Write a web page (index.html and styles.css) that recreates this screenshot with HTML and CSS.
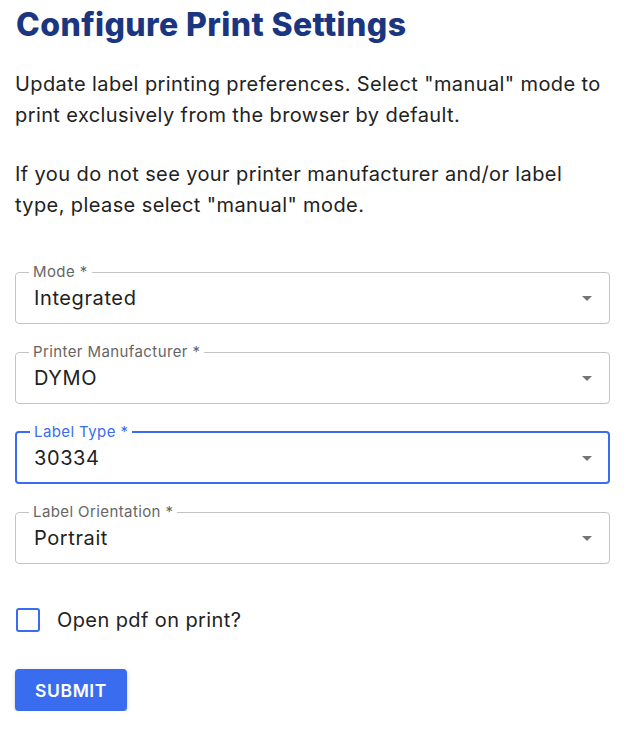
FILE: index.html
```html
<!DOCTYPE html>
<html lang="en">
<head>
<meta charset="utf-8">
<title>Configure Print Settings</title>
<link rel="stylesheet" href="styles.css">
</head>
<body>
<main class="page">
  <h1 class="title">Configure Print Settings</h1>
  <p class="intro">Update label printing preferences. Select "manual" mode to print exclusively from the browser by default.</p>
  <p class="intro">If you do not see your printer manufacturer and/or label type, please select "manual" mode.</p>

  <form class="form">
    <fieldset class="field">
      <legend class="field-label">Mode *</legend>
      <div class="field-row">
        <span class="field-value">Integrated</span>
        <svg class="caret" viewBox="0 0 24 24" width="24" height="24"><path d="M7 10l5 5 5-5z"/></svg>
      </div>
    </fieldset>
    <fieldset class="field">
      <legend class="field-label">Printer Manufacturer *</legend>
      <div class="field-row">
        <span class="field-value">DYMO</span>
        <svg class="caret" viewBox="0 0 24 24" width="24" height="24"><path d="M7 10l5 5 5-5z"/></svg>
      </div>
    </fieldset>
    <fieldset class="field field-focused">
      <legend class="field-label">Label Type *</legend>
      <div class="field-row">
        <span class="field-value">30334</span>
        <svg class="caret" viewBox="0 0 24 24" width="24" height="24"><path d="M7 10l5 5 5-5z"/></svg>
      </div>
    </fieldset>
    <fieldset class="field">
      <legend class="field-label">Label Orientation *</legend>
      <div class="field-row">
        <span class="field-value">Portrait</span>
        <svg class="caret" viewBox="0 0 24 24" width="24" height="24"><path d="M7 10l5 5 5-5z"/></svg>
      </div>
    </fieldset>

    <label class="check">
      <span class="check-box"></span>
      <span class="check-text">Open pdf on print?</span>
    </label>

    <button type="button" class="submit">SUBMIT</button>
  </form>
</main>
</body>
</html>
```
FILE: styles.css
```css
* { box-sizing: border-box; }
html, body { margin: 0; padding: 0; background: #fff; }
body {
  font-family: "Inter", "Liberation Sans", sans-serif;
  color: #222;
}
.page {
  padding: 5px 18px 0 15px;
}
.title {
  margin: 0;
  font-size: 32px;
  line-height: 40px;
  font-weight: 800;
  color: #1b3680;
  padding-left: 1px;
  letter-spacing: 0.4px;
}
.intro {
  margin: 24px 0 0;
  font-size: 20px;
  line-height: 31px;
  letter-spacing: 0.4px;
}
.intro + .intro { margin-top: 28px; }
.form {
  margin-top: 43px;
  display: flex;
  flex-direction: column;
  align-items: flex-start;
}
.field {
  margin: 0 0 20px;
  width: 100%;
  border: 1px solid #c4c4c4;
  border-radius: 4px;
  padding: 0 10px 7px 18px;
  min-width: 0;
}
.field-label {
  margin-left: -5px;
  padding: 0 4px;
  font-size: 15px;
  line-height: 16px;
  letter-spacing: 0.4px;
  color: #666;
}
.field-row {
  height: 36px;
  display: flex;
  align-items: center;
  justify-content: space-between;
}
.field-value {
  font-size: 20px;
  letter-spacing: 0.6px;
}
.caret { fill: #757575; display: block; }
.field-focused {
  border: 2px solid #3a6cf0;
  padding: 0 9px 6px 17px;
}
.field-focused .field-label { color: #3a6cf0; margin-left: -4px; }
.check {
  margin-top: 24px;
  display: flex;
  align-items: center;
  gap: 17px;
}
.check-box {
  width: 24px;
  height: 24px;
  border: 2px solid #3a6cf0;
  border-radius: 3px;
  margin-left: 1px;
}
.check-text { font-size: 20px; letter-spacing: 0.4px; }
.submit {
  margin-top: 37px;
  width: 112px;
  height: 42px;
  border: 0;
  border-radius: 4px;
  background: #3a6cf0;
  color: #fff;
  font-family: "Inter", "Liberation Sans", sans-serif;
  font-size: 17.5px;
  font-weight: 600;
  letter-spacing: 0.6px;
  box-shadow: 0 3px 1px -2px rgba(0,0,0,.2), 0 2px 2px 0 rgba(0,0,0,.14), 0 1px 5px 0 rgba(0,0,0,.12);
}
```
